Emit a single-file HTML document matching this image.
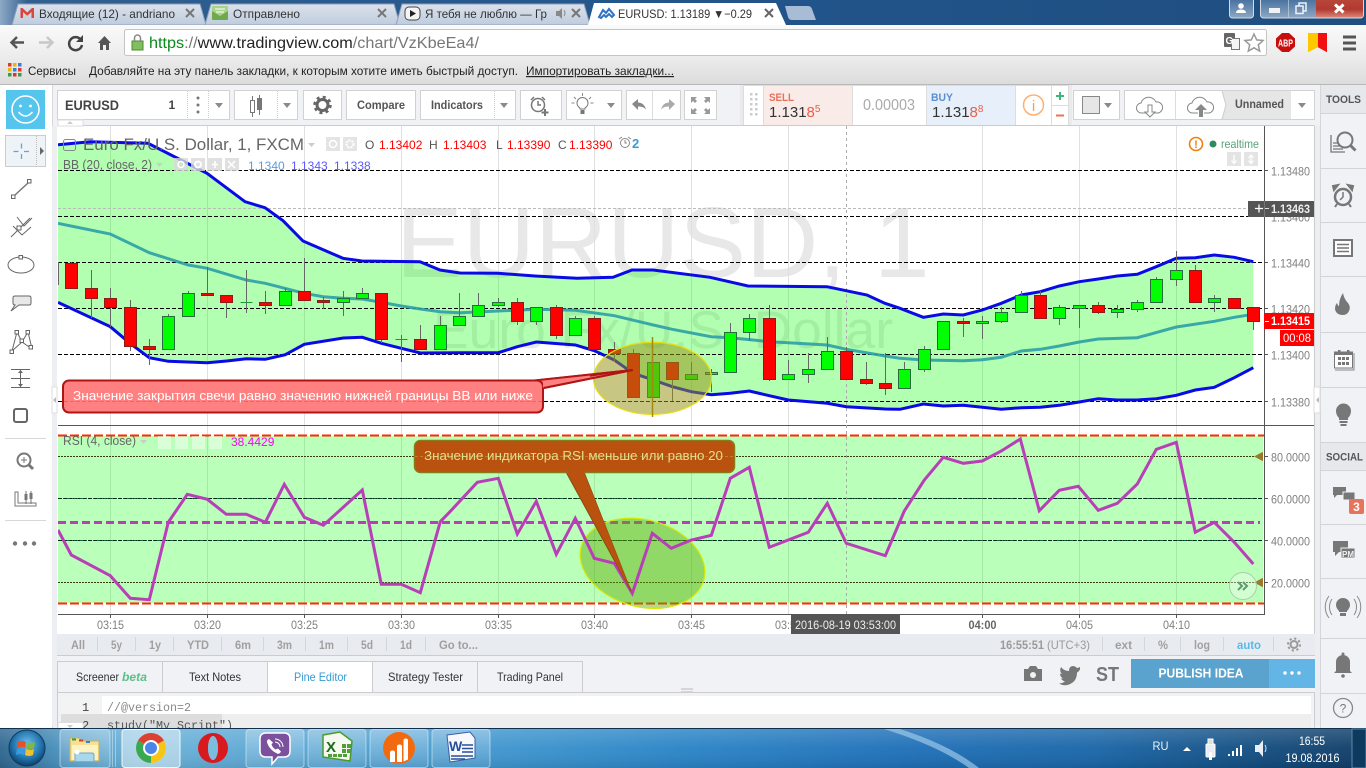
<!DOCTYPE html>
<html lang="ru"><head><meta charset="utf-8"><title>EURUSD</title>
<style>
html,body{margin:0;padding:0;width:1366px;height:768px;overflow:hidden;background:#fff}
svg{display:block}
text{font-family:"Liberation Sans","Noto Sans CJK SC",sans-serif}
.ax{font-size:12px;fill:#808080}
.tm{font-size:12px;fill:#808080;text-anchor:middle}
.rg{font-size:12px;font-weight:bold;fill:#a0a0a0}
.tb{font-size:12px;fill:#333}
.tab{font-size:12px;fill:#333}
.btn{fill:#fff;stroke:#d2d2d2}
.car{fill:#8a8a8a}
.ic{fill:none;stroke:#777;stroke-width:1.5}
.ig{fill:#777}
.g{fill:#0f0;stroke:#2a6a40}
.r{fill:#f00;stroke:#8a1c1c}
</style></head><body>
<svg width="1366" height="768" viewBox="0 0 1366 768" xmlns="http://www.w3.org/2000/svg">
<defs>
<linearGradient id="title" x1="0" x2="1" y1="0" y2="0"><stop offset="0" stop-color="#8fa9c6"/><stop offset=".02" stop-color="#31608f"/><stop offset=".5" stop-color="#22558c"/><stop offset="1" stop-color="#1f4e80"/></linearGradient>
<linearGradient id="itab" x1="0" x2="0" y1="0" y2="1"><stop offset="0" stop-color="#dbe2ec"/><stop offset="1" stop-color="#bfccdd"/></linearGradient>
<linearGradient id="tool" x1="0" x2="0" y1="0" y2="1"><stop offset="0" stop-color="#fafafa"/><stop offset="1" stop-color="#ececec"/></linearGradient>
<linearGradient id="book" x1="0" x2="0" y1="0" y2="1"><stop offset="0" stop-color="#ececec"/><stop offset="1" stop-color="#dcdcdc"/></linearGradient>
<linearGradient id="task" x1="0" x2="1" y1="0" y2="0"><stop offset="0" stop-color="#2e6690"/><stop offset=".05" stop-color="#4d98c4"/><stop offset=".1" stop-color="#6cb2d8"/><stop offset=".37" stop-color="#3e95ce"/><stop offset=".5" stop-color="#2a84c6"/><stop offset=".66" stop-color="#1f70b8"/><stop offset=".8" stop-color="#1a66a8"/><stop offset=".92" stop-color="#134e80"/><stop offset="1" stop-color="#103c66"/></linearGradient>
<linearGradient id="shine" x1="0" x2="0" y1="0" y2="1"><stop offset="0" stop-color="#fff" stop-opacity=".18"/><stop offset=".5" stop-color="#fff" stop-opacity=".04"/><stop offset="1" stop-color="#000" stop-opacity=".08"/></linearGradient>
<linearGradient id="wb" x1="0" x2="0" y1="0" y2="1"><stop offset="0" stop-color="#3f6b9b"/><stop offset="1" stop-color="#8ea7c2"/></linearGradient>
<linearGradient id="wr" x1="0" x2="0" y1="0" y2="1"><stop offset="0" stop-color="#b9483c"/><stop offset=".6" stop-color="#b23a30"/><stop offset="1" stop-color="#d98274"/></linearGradient>
<linearGradient id="tbtn" x1="0" x2="0" y1="0" y2="1"><stop offset="0" stop-color="#fff" stop-opacity=".3"/><stop offset="1" stop-color="#fff" stop-opacity=".08"/></linearGradient>
<radialGradient id="orb" cx=".5" cy=".4" r=".6"><stop offset="0" stop-color="#6fc3ee"/><stop offset=".7" stop-color="#1d6ea8"/><stop offset="1" stop-color="#0f3f66"/></radialGradient>
<clipPath id="ch"><rect x="58" y="126" width="1206" height="299"/></clipPath>
<clipPath id="ch2"><rect x="58" y="426" width="1206" height="188"/></clipPath>
</defs>

<!-- page base -->
<rect width="1366" height="768" fill="#f1f2f6"/>

<!-- title bar -->
<rect width="1366" height="25" fill="url(#title)"/>
<path d="M12 25 18 4H200L206 25z" fill="url(#itab)" stroke="#8ea0b8"/>
<path d="M205 25 211 4H394L400 25z" fill="url(#itab)" stroke="#8ea0b8"/>
<path d="M396 25 402 4H584L590 25z" fill="url(#itab)" stroke="#8ea0b8"/>
<path d="M588 25 594 3H776L786 25z" fill="#fff"/>
<path d="M785 6H808Q811 6 812 9L816 20H792Q789 20 788 17z" fill="#a9bcd6"/>
<!-- tab icons -->
<path d="M20.500 18V8H22.500L27.200 12.500 32 8H34V18H31.500V12L27.200 15.800 23 12V18z" fill="#d8473c"/>
<text class="tab" x="39" y="18" textLength="136" lengthAdjust="spacingAndGlyphs" fill="#555">Входящие (12) - andriano</text>
<path d="M186 9l8 8M194 9l-8 8" stroke="#777" stroke-width="2"/>
<rect x="212" y="6" width="16" height="14" fill="#6eaa4c" rx="1"/><path d="M212 6h16v5l-8 5-8-5z" fill="#a8d48a"/><path d="M215 9h10M216 12h8" stroke="#fff"/>
<text class="tab" x="233" y="18" textLength="67" lengthAdjust="spacingAndGlyphs">Отправлено</text>
<path d="M378 9l8 8M386 9l-8 8" stroke="#777" stroke-width="2"/>
<rect x="405" y="7" width="15" height="13" rx="4" fill="#f4f4f4" stroke="#444"/><path d="M410 10v7l6-3.500z" fill="#222"/>
<text class="tab" x="425" y="18" textLength="122" lengthAdjust="spacingAndGlyphs" fill="#555">Я тебя не люблю — Гр</text>
<path d="M556 11h3l3-3v11l-3-3h-3z" fill="#888"/><path d="M564 10q2 3 0 6" fill="none" stroke="#888"/>
<path d="M572 9l8 8M580 9l-8 8" stroke="#777" stroke-width="2"/>
<path d="M599 17l4-7 3 3 3-4 5 6-2 2-3-3-3 3-2-2-3 3z" fill="none" stroke="#2f73c4" stroke-width="2"/>
<text class="tab" x="618" y="18" fill="#222" textLength="134" lengthAdjust="spacingAndGlyphs">EURUSD: 1.13189 ▼−0.29</text>
<path d="M765 9l8 8M773 9l-8 8" stroke="#666" stroke-width="2"/>
<!-- window controls -->
<rect x="1229.500" y="-3" width="24" height="21" rx="3" fill="url(#wb)" stroke="#d0dbe6"/>
<circle cx="1241" cy="6" r="2.800" fill="#fff"/><path d="M1236 13q0-3.500 5-3.500t5 3.500z" fill="#fff"/>
<rect x="1260.500" y="-3" width="103" height="21" rx="3" fill="url(#wb)" stroke="#d0dbe6"/>
<path d="M1316 -2h46q1 0 1 1v17q0 1-1 1h-46z" fill="url(#wr)"/>
<path d="M1288.500 -2V17" stroke="#d0dbe6" stroke-opacity=".6"/>
<rect x="1269" y="8" width="11" height="5" fill="#f0f3f6"/>
<rect x="1296" y="6" width="7" height="7.500" fill="none" stroke="#eef2f6" stroke-width="1.500"/><path d="M1299 5.500V3h7v8h-2.500" fill="none" stroke="#eef2f6" stroke-width="1.500"/>
<path d="M1335 4.500l8.500 8M1343.500 4.500l-8.500 8" stroke="#fff" stroke-width="3"/>

<!-- address toolbar -->
<rect y="25" width="1366" height="32" fill="url(#tool)"/>
<rect y="57" width="1366" height="27" fill="url(#book)"/>
<rect y="84" width="1366" height="1" fill="#b8b8b8"/>
<path d="M24 42.500H12M17 37l-5.500 5.500L17 48" fill="none" stroke="#555" stroke-width="2.500"/>
<path d="M39 42.500H52M47 37l5.500 5.500L47 48" fill="none" stroke="#c8c8c8" stroke-width="2.500"/>
<path d="M81 40a6.500 6.500 0 1 0 1 5" fill="none" stroke="#444" stroke-width="2.500"/><path d="M83 35v7h-7z" fill="#444"/>
<path d="M98 43l6.500-7 6.500 7h-2v7h-3v-5h-3v5h-3v-7z" fill="#555"/>
<rect x="124.500" y="29.500" width="1142" height="26" rx="2" fill="#fff" stroke="#c4c4c4"/>
<rect x="132" y="41" width="11" height="9" fill="#7fbf60" stroke="#4d8a30"/><path d="M134.500 41v-3a3 3 0 0 1 6 0v3" fill="none" stroke="#888" stroke-width="1.500"/>
<text x="149" y="48" font-size="16" textLength="330" lengthAdjust="spacingAndGlyphs"><tspan fill="#0a8a1a">https</tspan><tspan fill="#777">://</tspan><tspan fill="#222">www.tradingview.com</tspan><tspan fill="#777">/chart/VzKbeEa4/</tspan></text>
<rect x="1224" y="33" width="11" height="14" rx="1" fill="#666"/><rect x="1231.500" y="38.500" width="8" height="11" fill="#f4f4f4" stroke="#777"/>
<text x="1225.500" y="44" font-size="10" fill="#fff" font-weight="bold">G</text>
<path d="M1254 34l2.700 5.900 6.400.6-4.800 4.300 1.400 6.300-5.700-3.300-5.700 3.300 1.400-6.300-4.800-4.300 6.400-.6z" fill="#fff" stroke="#999" stroke-width="1.500"/>
<path d="M1282 33h7l6 5.500v8L1289 52h-7l-6-5.500v-8z" fill="#c90c0c"/>
<text x="1278" y="46.500" font-size="10" font-weight="bold" fill="#fff" textLength="15" lengthAdjust="spacingAndGlyphs">ABP</text>
<path d="M1308 33h10v14.200l-10 5z" fill="#fdc800"/><path d="M1318 33h9v19.200l-9-5z" fill="#f01010"/>
<path d="M1343 37h13M1343 43h13M1343 49h13" stroke="#555" stroke-width="3"/>
<!-- bookmarks -->
<g><rect x="8" y="63" width="3.500" height="3.500" fill="#d83b2b"/><rect x="13" y="63" width="3.500" height="3.500" fill="#f0b400"/><rect x="18" y="63" width="3.500" height="3.500" fill="#3a7de0"/><rect x="8" y="68" width="3.500" height="3.500" fill="#f0b400"/><rect x="13" y="68" width="3.500" height="3.500" fill="#3a7de0"/><rect x="18" y="68" width="3.500" height="3.500" fill="#d83b2b"/><rect x="8" y="73" width="3.500" height="3.500" fill="#3a9a4a"/><rect x="13" y="73" width="3.500" height="3.500" fill="#d83b2b"/><rect x="18" y="73" width="3.500" height="3.500" fill="#3a9a4a"/></g>
<text x="28" y="75" font-size="12" fill="#222" textLength="48" lengthAdjust="spacingAndGlyphs">Сервисы</text>
<text x="89" y="75" font-size="12" fill="#222" textLength="429" lengthAdjust="spacingAndGlyphs">Добавляйте на эту панель закладки, к которым хотите иметь быстрый доступ.</text>
<text x="526" y="75" font-size="12" fill="#222" textLength="148" lengthAdjust="spacingAndGlyphs" text-decoration="underline">Импортировать закладки...</text>

<!-- left toolbar -->
<rect y="85" width="52" height="643" fill="#fff"/>
<rect x="52" y="85" width="1" height="643" fill="#d8d8dc"/>
<rect x="6" y="90" width="39" height="39" fill="#56c5ed"/>
<circle cx="25.500" cy="109.500" r="13.500" fill="none" stroke="#fff" stroke-width="1.500"/><circle cx="20.500" cy="106" r="1.400" fill="#fff"/><circle cx="30.500" cy="106" r="1.400" fill="#fff"/><path d="M18.500 112q7 8 14 0" fill="none" stroke="#fff" stroke-width="1.500"/>
<rect x="5.500" y="135.500" width="40" height="31" fill="#eef3f8" stroke="#ccc"/>
<path d="M36.500 136v30" stroke="#bbb" stroke-dasharray="1 1"/><path d="M40 147v8l4-4z" fill="#666"/>
<path d="M13.500 151.500h5M24 151.500h5M21.500 143.500v5M21.500 154v5" stroke="#5aa8d8" stroke-width="1.300"/>
<path d="M15 195l13-12" class="ic" stroke-width="1"/><rect x="11.500" y="195" width="3.500" height="3.500" fill="#fff" stroke="#666"/><rect x="27.500" y="179.500" width="3.500" height="3.500" fill="#fff" stroke="#666"/>
<path d="M11 237l19-19M17 217l7 9 8-8M13 226l9 9 9-8" fill="none" stroke="#666"/><rect x="17" y="226" width="4" height="4" fill="#fff" stroke="#666"/>
<ellipse cx="21" cy="265" rx="13" ry="8" fill="none" stroke="#666"/><rect x="19" y="255.500" width="3.500" height="3.500" fill="#fff" stroke="#666"/>
<path d="M15 296h14q2 0 2 2v5q0 2-2 2H19l-8 6 4-6q-2 0-2-2v-5q0-2 2-2z" fill="#e8e8e8" stroke="#666"/>
<path d="M12 351l5-19 5 10 6-10 4 17M22 342l-5-10M22 342l6-10M12 351l10-9 10 7" fill="none" stroke="#666"/><rect x="10" y="350" width="3.500" height="3.500" fill="#fff" stroke="#666"/><rect x="15" y="330.500" width="3.500" height="3.500" fill="#fff" stroke="#666"/><rect x="26" y="330.500" width="3.500" height="3.500" fill="#fff" stroke="#666"/><rect x="20" y="339" width="3.500" height="3.500" fill="#fff" stroke="#666"/><rect x="29" y="345.500" width="3.500" height="3.500" fill="#fff" stroke="#666"/>
<path d="M11 369.500h19M11 387.500h19M11 378.500h19M20.500 370v17" stroke="#666" fill="none"/><path d="M18 373l2.500-3 2.500 3zM18 384l2.500 3 2.500-3z" fill="#666"/>
<rect x="14" y="409" width="13" height="13" rx="2" fill="#fff" stroke="#666" stroke-width="2"/>
<path d="M5 438.500h41M5 520.500h41" stroke="#d8d8d8"/>
<circle cx="24" cy="460" r="6.500" fill="none" stroke="#777" stroke-width="2"/><path d="M21 460h6M24 457v6" stroke="#777"/><path d="M29 465l4 4" stroke="#777" stroke-width="3"/>
<path d="M15 492v14h21v-3h-18v-11z" fill="none" stroke="#777"/><path d="M26 491v13M31 491v13" stroke="#777"/><rect x="24.500" y="494" width="3" height="6" fill="#777"/><rect x="29.500" y="493" width="3" height="6" fill="#777"/>
<circle cx="15" cy="543.500" r="2.200" fill="#777"/><circle cx="25" cy="543.500" r="2.200" fill="#777"/><circle cx="34" cy="543.500" r="2.200" fill="#777"/>

<!-- chart top toolbar -->
<rect x="57.500" y="90.500" width="172" height="29" class="btn"/>
<text x="65" y="110" font-size="14" font-weight="bold" fill="#444" textLength="54" lengthAdjust="spacingAndGlyphs">EURUSD</text>
<text x="168.500" y="109" font-size="12" font-weight="bold" fill="#444">1</text>
<path d="M187.500 91v28M208.500 91v28" stroke="#ccc" stroke-dasharray="1 1"/>
<circle cx="198" cy="98" r="1.500" fill="#777"/><circle cx="198" cy="105" r="1.500" fill="#777"/><circle cx="198" cy="112" r="1.500" fill="#777"/>
<path class="car" d="M215 103h8l-4 5z"/>
<rect x="234.500" y="90.500" width="63" height="29" class="btn"/>
<path d="M252.500 96v21M259.500 95v20" stroke="#777"/><rect x="250.500" y="100.500" width="4" height="12" fill="#fff" stroke="#777"/><rect x="257" y="98" width="5" height="12" fill="#777"/>
<path d="M277.500 91v28" stroke="#ccc" stroke-dasharray="1 1"/><path class="car" d="M283 103h8l-4 5z"/>
<rect x="303.500" y="90.500" width="38" height="29" class="btn"/>
<circle cx="322.500" cy="105" r="5.500" fill="none" stroke="#666" stroke-width="3"/><circle cx="322.500" cy="105" r="8" fill="none" stroke="#666" stroke-width="2.500" stroke-dasharray="3 3.280"/>
<rect x="346.500" y="90.500" width="69" height="29" class="btn"/>
<text x="357" y="109" font-size="12" font-weight="bold" fill="#555" textLength="48" lengthAdjust="spacingAndGlyphs">Compare</text>
<rect x="420.500" y="90.500" width="95" height="29" class="btn"/>
<text x="431" y="109" font-size="12" font-weight="bold" fill="#555" textLength="52" lengthAdjust="spacingAndGlyphs">Indicators</text>
<path d="M494.500 91v28" stroke="#ccc" stroke-dasharray="1 1"/><path class="car" d="M500 103h8l-4 5z"/>
<rect x="520.500" y="90.500" width="41" height="29" class="btn"/>
<circle cx="538" cy="105" r="6.500" fill="none" stroke="#777" stroke-width="1.500"/><path d="M538 101v4h3M531 100l3-3M545 100l-3-3" fill="none" stroke="#777" stroke-width="1.500"/><path d="M545 109v7M541.500 112.500h7" stroke="#777" stroke-width="2"/>
<rect x="566.500" y="90.500" width="55" height="29" class="btn"/>
<path d="M580 108q-3-2-3-5a5.500 5.500 0 0 1 11 0q0 3-3 5v1h-5z" fill="#fff" stroke="#777"/><rect x="580.500" y="110" width="4" height="4" fill="#777"/><path d="M582.500 93v3M574 97l2 2M591 97l-2 2M571.500 103h3M590.500 103h3" stroke="#888"/>
<path class="car" d="M607 103h8l-4 5z"/>
<rect x="626.500" y="90.500" width="54" height="29" class="btn"/><path d="M652.500 91v28" stroke="#ddd"/>
<path d="M632 104l6-5v3.500q6 0 8 7-3-3.500-8-3V110z" fill="#888"/><path d="M675 104l-6-5v3.500q-6 0-8 7 3-3.500 8-3V110z" fill="#aaa"/>
<rect x="684.500" y="90.500" width="32" height="29" class="btn"/>
<path d="M691 97h6l-2 2 2 2-2 2-2-2-2 2zM710 97h-6l2 2-2 2 2 2 2-2 2 2zM691 114h6l-2-2 2-2-2-2-2 2-2-2zM710 114h-6l2-2-2-2 2-2 2 2 2-2z" fill="#999"/>
<!-- trading panel -->
<rect x="740" y="85" width="332" height="44" fill="#ddd" opacity=".35"/>
<rect x="743.500" y="85.500" width="325" height="40" fill="#fff" stroke="#ddd"/>
<g fill="#ccc"><rect x="750" y="93" width="2.500" height="2.500"/><rect x="755" y="93" width="2.500" height="2.500"/><rect x="750" y="98" width="2.500" height="2.500"/><rect x="755" y="98" width="2.500" height="2.500"/><rect x="750" y="103" width="2.500" height="2.500"/><rect x="755" y="103" width="2.500" height="2.500"/><rect x="750" y="108" width="2.500" height="2.500"/><rect x="755" y="108" width="2.500" height="2.500"/><rect x="750" y="113" width="2.500" height="2.500"/><rect x="755" y="113" width="2.500" height="2.500"/></g>
<rect x="764" y="86" width="88" height="39" fill="#f9ebe8"/>
<rect x="926" y="86" width="89" height="39" fill="#e7f0fa"/>
<path d="M763.500 86v39M852.500 86v39M926.500 86v39M1015.500 86v39M1051.500 86v39M1051 105.500h17" stroke="#ddd"/>
<text x="769" y="101" font-size="11" font-weight="bold" fill="#e8715a" textLength="25" lengthAdjust="spacingAndGlyphs">SELL</text>
<text x="769" y="117" font-size="15" fill="#333">1.131<tspan fill="#e8604a">8</tspan><tspan fill="#e8604a" font-size="10" dy="-5">5</tspan></text>
<text x="863" y="110" font-size="15.500" fill="#aaa" textLength="52" lengthAdjust="spacingAndGlyphs">0.00003</text>
<text x="931" y="101" font-size="11" font-weight="bold" fill="#5a8fd0" textLength="22" lengthAdjust="spacingAndGlyphs">BUY</text>
<text x="932" y="117" font-size="15" fill="#333">1.131<tspan fill="#e8604a">8</tspan><tspan fill="#e8604a" font-size="10" dy="-5">8</tspan></text>
<circle cx="1033.500" cy="105" r="10" fill="none" stroke="#ffb070" stroke-width="1.500"/><text x="1033.500" y="111" font-size="15" text-anchor="middle" fill="#ff9a50">i</text>
<path d="M1056 96h8M1060 92v8" stroke="#3cb878" stroke-width="2"/><path d="M1056 115.500h8" stroke="#e8735a" stroke-width="2"/>
<rect x="1073.500" y="90.500" width="46" height="29" class="btn"/>
<rect x="1082.500" y="96.500" width="17" height="17" fill="#e6e6e6" stroke="#888"/><path class="car" d="M1104 103h8l-4 5z"/>
<rect x="1124.500" y="90.500" width="190" height="29" class="btn"/>
<path d="M1175.500 91v28" stroke="#ddd"/>
<path d="M1222 91h69v28h-69l3-14z" fill="#e6e6e6"/><path d="M1222 91l4 14-4 14" fill="#fff" stroke="#ccc"/>
<path d="M1147 113h-5a5 5 0 0 1-1-10 8 8 0 0 1 15-1 5.500 5.500 0 0 1 2 11h-5" fill="none" stroke="#888"/><path d="M1148 105h4v7h3l-5 5-5-5h3z" fill="#fff" stroke="#888"/>
<path d="M1198 113h-5a5 5 0 0 1-1-10 8 8 0 0 1 15-1 5.500 5.500 0 0 1 2 11h-5" fill="none" stroke="#888"/><path d="M1199 117v-7h-4l6-6 6 6h-4v7z" fill="#888"/>
<text x="1235" y="108" font-size="12" font-weight="bold" fill="#555" textLength="49" lengthAdjust="spacingAndGlyphs">Unnamed</text>
<path class="car" d="M1298 103h8l-4 5z"/>

<!-- right panel -->
<rect x="1320" y="85" width="46" height="643" fill="#f1f2f6"/>
<path d="M1320.500 85v643" stroke="#d6d6da"/>
<rect x="1321" y="85" width="45" height="28" fill="#e6e8ec"/>
<text x="1326" y="103" font-size="11" font-weight="bold" fill="#555" textLength="35" lengthAdjust="spacingAndGlyphs">TOOLS</text>
<path d="M1320 113.500h46M1320 168.500h46M1320 222.500h46M1320 276.500h46M1320 332.500h46M1320 387.500h46M1320 442.500h46M1320 470.500h46M1320 524.500h46M1320 578.500h46M1320 638.500h46M1320 693.500h46" stroke="#d4d4d8"/>
<rect x="1321" y="443" width="45" height="27" fill="#e6e8ec"/>
<text x="1326" y="460.500" font-size="11" font-weight="bold" fill="#555" textLength="37" lengthAdjust="spacingAndGlyphs">SOCIAL</text>
<path d="M1331 135v17h14M1333 143h5M1333 146h7M1333 149h10" fill="none" stroke="#777" stroke-width="1.300"/><circle cx="1345" cy="140" r="7.500" fill="#f1f2f6" stroke="#777" stroke-width="2"/><path d="M1350.500 145.500l5 5" stroke="#777" stroke-width="3"/>
<circle cx="1343" cy="197" r="8" fill="none" stroke="#777" stroke-width="2.500"/><path d="M1343 192v5l-3 3" fill="none" stroke="#777" stroke-width="1.500"/><path d="M1334 190l4-5-5 1zM1352 190l-4-5 5 1zM1337 204l-2 3M1349 204l2 3" stroke="#777" stroke-width="2" fill="#777"/>
<rect x="1334" y="240" width="18" height="16" fill="#fff" stroke="#777" stroke-width="2"/><path d="M1337 244.500h12M1337 248h12M1337 251.500h12" stroke="#777" stroke-width="1.500"/>
<path d="M1343 293q1 6 5 10 3 4 1 8-2 4-6 4-7 0-8-6 0-4 2-6 1 3 2 3 0-7 4-13z" fill="#777"/>
<path d="M1354 353v17h-19" fill="none" stroke="#888"/><rect x="1334.500" y="352" width="18" height="16" fill="#fff" stroke="#777"/><rect x="1334.500" y="352" width="18" height="3" fill="#777"/><rect x="1338" y="350" width="2.500" height="4" fill="#777"/><rect x="1347" y="350" width="2.500" height="4" fill="#777"/><g fill="#777"><rect x="1338" y="357" width="3" height="3"/><rect x="1342" y="357" width="3" height="3"/><rect x="1346" y="357" width="3" height="3"/><rect x="1338" y="362" width="3" height="3"/><rect x="1342" y="362" width="3" height="3"/><rect x="1346" y="362" width="3" height="3"/></g>
<path d="M1339 418q-3-3-3-7a7.500 7.500 0 0 1 15 0q0 4-3 7v2h-9z" fill="#777"/><rect x="1339.500" y="421" width="8" height="2" fill="#777"/><rect x="1340.500" y="424" width="6" height="2" fill="#777"/>
<path d="M1333 487h13v8h-9l-3 3v-3h-1z" fill="#777"/><path d="M1343 492h12v8h-1v3l-3-3h-8z" fill="#777" stroke="#f1f2f6"/>
<rect x="1349" y="499" width="15" height="15" rx="2" fill="#e6735c"/><text x="1356.500" y="511" font-size="12" font-weight="bold" text-anchor="middle" fill="#fff">3</text>
<path d="M1333 541h15v11h-9l-4 4v-4h-2z" fill="#777"/><rect x="1341" y="548" width="14" height="10" fill="#777" stroke="#f1f2f6"/>
<text x="1342" y="557" font-size="8" font-weight="bold" fill="#f1f2f6">PM</text>
<path d="M1339 611q-3-3-3-6a7 7 0 0 1 14 0q0 3-3 6v1h-8z" fill="#777"/><rect x="1340" y="613" width="6" height="3" fill="#777"/>
<path d="M1332 599a14 14 0 0 0 0 16M1354 599a14 14 0 0 1 0 16M1329 596a18 18 0 0 0 0 22M1357 596a18 18 0 0 1 0 22" fill="none" stroke="#888"/>
<path d="M1336 671v-9a7 7 0 0 1 14 0v9l2 2h-18z" fill="#777"/><circle cx="1343" cy="676" r="1.800" fill="#777"/><circle cx="1343" cy="654" r="1.500" fill="#777"/>
<circle cx="1343" cy="708" r="9.500" fill="none" stroke="#888" stroke-width="1.300"/><text x="1343" y="712.500" font-size="12" text-anchor="middle" fill="#777">?</text>

<!-- chart frame -->
<rect x="57" y="126" width="1258" height="509" fill="#fff"/>
<path d="M57.500 125.500h1257M1314.500 126v529" stroke="#ccc" fill="none"/>
<rect x="58" y="120" width="25" height="6" fill="#fff" stroke="#ddd"/><path d="M67 124h6l-3-3z" fill="#ccc"/>
<path d="M1315 126h5v600h-5zM52 126h5v600h-5z" fill="#eceef2"/>
<rect x="1314" y="387" width="6" height="26" fill="#fff" stroke="#ddd" /><path d="M1319 397v6l-3-3z" fill="#bbb"/>
<rect x="52" y="387" width="5" height="26" fill="#fff" stroke="#ddd"/><path d="M56 397v6l-3-3z" fill="#bbb"/>

<!-- main pane -->
<g clip-path="url(#ch)">
<text x="396" y="277" font-size="100" fill="#e8e8e8">EURUSD, 1</text>
<text x="433" y="348" font-size="53" fill="#e8e8e8" textLength="460" lengthAdjust="spacingAndGlyphs">Euro Fx/U.S. Dollar</text>
<path d="M110.500 126V425M207.500 126V425M304.500 126V425M401.500 126V425M498.500 126V425M594.500 126V425M691.500 126V425M788.500 126V425M982.500 126V425M1079.500 126V425M1176.500 126V425" stroke="#e0e0e0" fill="none"/>
<polygon fill="#0f0" fill-opacity=".3" points="58,144.700 90,141.700 148,143.300 207,173.300 245,201.700 265,207.700 283,220.700 303,241 343,258.300 362,261 420,261.700 440,270 460,273 498,273.300 535,276 577,278.300 613,277.300 632,270 653,270 710,277.300 748,286 827,286.700 867,295 885,303.300 900,308.300 923.300,317.300 943.300,314 963.300,315 982.300,310 1001.300,303.300 1021.300,295 1040.300,291.700 1059.300,286 1079.300,281.700 1098.300,279 1117.300,276 1137.300,274.300 1156.300,266.700 1176.300,258.300 1195.300,257.700 1214.300,255 1234.300,257.300 1253.300,261.700 1253.300,367.700 1234.300,377.700 1214.300,387.300 1195.300,390 1176.300,395.300 1156.300,398.700 1137.300,400 1117.300,400 1098.300,398.700 1079.300,402 1059.300,405.300 1040.300,407.300 1021.300,407.700 1001.300,409.300 982.300,407.300 963.300,405.300 943.300,406 923.300,404 900,409.300 885.300,409 846.300,406.700 827.300,403.300 788.300,400 769.300,395.700 749.300,391 730.300,393.300 711.300,394.700 691.300,391.700 672.300,386.700 653.300,380 633.300,373.300 614.300,360 594.300,350.700 575.300,345 536.300,342 517.300,346.700 498.300,352.700 460,352.700 420.300,353 401.300,348.300 381.300,343.300 362.300,337.300 343.300,338 304.300,344.300 285.300,354.700 265.300,359.300 246.300,358.700 226.700,361 207.300,362.700 168.300,361.300 149.300,357.700 130,343.300 110.300,326.700 58,302.300"/>
<path d="M58 170.500H1264M58 216.500H1264M58 262.500H1264M58 308.500H1264M58 354.500H1264M58 401.500H1264" stroke="#000" stroke-dasharray="4 2" fill="none"/>
<path d="M58 208.500H1264" stroke="#bbb" stroke-dasharray="3 2"/>
<path d="M846.500 126V425" stroke="#aaa" stroke-dasharray="3 3"/>
<polyline fill="none" stroke="#2e9ea6" stroke-width="3" stroke-opacity=".9" points="58,223.300 110.300,234 149.300,252.700 188.300,265 207.300,268.300 246.300,280 265.300,283.300 304.300,293.300 323.300,296.700 343.300,298.300 362.300,299 381.300,302.300 401.300,306 420.300,309 440.300,311.700 460,312.700 498.300,311 536.300,309.300 575.300,310.300 614.300,315.700 653.300,325 672.300,329.300 711.300,336.700 730.300,337.700 769.300,341.700 788.300,342.700 827.300,345 846.300,349.300 885.300,356 900,358.300 923.300,360 963.300,360.700 982.300,359.700 1001.300,357.300 1021.300,351 1040.300,349.300 1059.300,346 1079.300,342 1098.300,339 1137.300,337.700 1176.300,327 1214.300,321.300 1234.300,317.300 1253.300,314.300"/>
<g fill="none" stroke="#0a0ae6" stroke-width="3">
<polyline points="58,144.700 90,141.700 148,143.300 207,173.300 245,201.700 265,207.700 283,220.700 303,241 343,258.300 362,261 420,261.700 440,270 460,273 498,273.300 535,276 577,278.300 613,277.300 632,270 653,270 710,277.300 748,286 827,286.700 867,295 885,303.300 900,308.300 923.300,317.300 943.300,314 963.300,315 982.300,310 1001.300,303.300 1021.300,295 1040.300,291.700 1059.300,286 1079.300,281.700 1098.300,279 1117.300,276 1137.300,274.300 1156.300,266.700 1176.300,258.300 1195.300,257.700 1214.300,255 1234.300,257.300 1253.300,261.700"/>
<polyline points="58,302.300 110.300,326.700 130,343.300 149.300,357.700 168.300,361.300 207.300,362.700 226.700,361 246.300,358.700 265.300,359.300 285.300,354.700 304.300,344.300 343.300,338 362.300,337.300 381.300,343.300 401.300,348.300 420.300,353 460,352.700 498.300,352.700 517.300,346.700 536.300,342 575.300,345 594.300,350.700 614.300,360 633.300,373.300 653.300,380 672.300,386.700 691.300,391.700 711.300,394.700 730.300,393.300 749.300,391 769.300,395.700 788.300,400 827.300,403.300 846.300,406.700 885.300,409 900,409.300 923.300,404 943.300,406 963.300,405.300 982.300,407.300 1001.300,409.300 1021.300,407.700 1040.300,407.300 1059.300,405.300 1079.300,402 1098.300,398.700 1117.300,400 1137.300,400 1156.300,398.700 1176.300,395.300 1195.300,390 1214.300,387.300 1234.300,377.700 1253.300,367.700"/>
</g>
<!-- wicks -->
<path fill="none" stroke="#666" d="M58.500 262V285M71.500 262V288M91.500 270V318M110.500 288V327M130.500 300V351M149.500 339V365M168.500 314V349M188.500 291V316M207.500 267V295M226.500 295V318M246.500 270V313M265.500 291V314M285.500 288V305M304.500 258V300M323.500 297V309M343.500 291V316M362.500 288V298M381.500 293V343M401.500 335V362M420.500 325V349M440.500 316V349M459.500 293V325M478.500 293V316M498.500 298V307M517.500 298V325M536.500 307V325M556.500 305V339M575.500 316V335M594.500 316V349M614.500 342V362M633.500 349V397M672.500 362V401M691.500 362V379M711.500 369V392M730.500 323V372M749.500 314V341M769.500 305V381M788.500 360V379M808.500 353V383M827.500 337V369M846.500 347V379M866.500 362V385M885.500 353V395M904.500 362V389M924.500 346V372M943.500 321V349M963.500 318V337M982.500 316V339M1001.500 307V323M1021.500 291V312M1040.500 291V318M1059.500 305V325M1079.500 305V328M1098.500 302V314M1117.500 305V318M1137.500 300V312M1156.500 277V302M1176.500 251V286M1195.500 265V302M1214.500 295V312M1234.500 298V308M1253.500 307V330"/>
<!-- bodies -->
<rect class="r" x="65.500" y="263.500" width="12" height="25"/><rect class="r" x="85.500" y="288.500" width="12" height="10"/><rect class="r" x="104.500" y="298.500" width="12" height="9"/><rect class="r" x="124.500" y="307.500" width="12" height="39"/><rect class="r" x="143.500" y="346.500" width="12" height="3"/>
<rect class="g" x="162.500" y="316.500" width="12" height="33"/><rect class="g" x="182.500" y="293.500" width="12" height="23"/>
<rect class="r" x="201.500" y="293.500" width="12" height="2"/><rect class="r" x="220.500" y="295.500" width="12" height="7"/>
<path d="M240.500 302.500h12" stroke="#1a9a30"/>
<rect class="r" x="259.500" y="302.500" width="12" height="3"/><rect class="g" x="279.500" y="291.500" width="12" height="14"/><rect class="r" x="298.500" y="291.500" width="12" height="9"/><rect class="r" x="317.500" y="300.500" width="12" height="2"/><rect class="g" x="337.500" y="298.500" width="12" height="4"/><rect class="g" x="356.500" y="293.500" width="12" height="5"/><rect class="r" x="375.500" y="293.500" width="12" height="46"/>
<path d="M395.500 339.500h12" stroke="#1a9a30"/>
<rect class="r" x="414.500" y="339.500" width="12" height="10"/><rect class="g" x="434.500" y="325.500" width="12" height="24"/><rect class="g" x="453.500" y="316.500" width="12" height="9"/><rect class="g" x="472.500" y="305.500" width="12" height="11"/><rect class="g" x="492.500" y="302.500" width="12" height="3"/><rect class="r" x="511.500" y="302.500" width="12" height="19"/><rect class="g" x="530.500" y="307.500" width="12" height="14"/><rect class="r" x="550.500" y="307.500" width="12" height="28"/><rect class="g" x="569.500" y="318.500" width="12" height="17"/><rect class="r" x="588.500" y="318.500" width="12" height="31"/><rect class="r" x="608.500" y="349.500" width="12" height="4"/><rect class="r" x="627.500" y="353.500" width="12" height="44"/><rect class="g" x="647.500" y="362.500" width="12" height="35"/><rect class="r" x="666.500" y="362.500" width="12" height="17"/><rect class="g" x="685.500" y="374.500" width="12" height="5"/><rect class="g" x="705.500" y="372.500" width="12" height="2"/><rect class="g" x="724.500" y="332.500" width="12" height="40"/><rect class="g" x="743.500" y="318.500" width="12" height="14"/><rect class="r" x="763.500" y="318.500" width="12" height="61"/><rect class="g" x="782.500" y="374.500" width="12" height="5"/><rect class="g" x="802.500" y="369.500" width="12" height="5"/><rect class="g" x="821.500" y="351.500" width="12" height="18"/><rect class="r" x="840.500" y="351.500" width="12" height="28"/><rect class="r" x="860.500" y="379.500" width="12" height="4"/><rect class="r" x="879.500" y="383.500" width="12" height="5"/><rect class="g" x="898.500" y="369.500" width="12" height="19"/><rect class="g" x="918.500" y="349.500" width="12" height="20"/><rect class="g" x="937.500" y="321.500" width="12" height="28"/><rect class="r" x="957.500" y="321.500" width="12" height="2"/><rect class="g" x="976.500" y="321.500" width="12" height="2"/><rect class="g" x="995.500" y="312.500" width="12" height="9"/><rect class="g" x="1015.500" y="295.500" width="12" height="17"/><rect class="r" x="1034.500" y="295.500" width="12" height="23"/><rect class="g" x="1053.500" y="307.500" width="12" height="11"/><rect class="g" x="1073.500" y="305.500" width="12" height="3"/><rect class="r" x="1092.500" y="305.500" width="12" height="7"/><rect class="g" x="1111.500" y="309.500" width="12" height="3"/><rect class="g" x="1131.500" y="302.500" width="12" height="7"/><rect class="g" x="1150.500" y="279.500" width="12" height="23"/><rect class="g" x="1170.500" y="270.500" width="12" height="9"/><rect class="r" x="1189.500" y="270.500" width="12" height="32"/><rect class="g" x="1208.500" y="298.500" width="12" height="4"/><rect class="r" x="1228.500" y="298.500" width="12" height="10"/><rect class="r" x="1247.500" y="307.500" width="12" height="14"/>
<!-- red ellipse annotation -->
<ellipse cx="652.500" cy="378.300" rx="59" ry="36" fill="#969313" fill-opacity=".53" stroke="#e6de10" stroke-width="1.300"/>
<path d="M652.500 337V417" stroke="#a08a10" stroke-width="1.500"/>
<path d="M536 380.500 632.700 370 544 388V395H536z" fill="#ff8080" stroke="none"/>
<path d="M536 380.500 632.700 370 544 388" fill="none" stroke="#b01515" stroke-width="2"/>
<rect x="63" y="380.500" width="480" height="32" rx="6" fill="#ff8080" stroke="#b01515" stroke-width="2"/>
<path d="M534 380.500 632.700 370 543 388V381z" fill="#ff8080"/><path d="M534 380.500 632.700 370 543.500 388" fill="none" stroke="#b01515" stroke-width="2"/>
<path d="M632.700 370 590 374.500 590 376.700z" fill="#b01515"/>
<path d="M64 401.500H542" stroke="#c05050" stroke-dasharray="4 2" stroke-opacity=".5"/>
<text x="73" y="400" font-size="13" fill="#fff" textLength="460" lengthAdjust="spacingAndGlyphs">Значение закрытия свечи равно значению нижней границы BB или ниже</text>
<!-- legend -->
<rect x="63.500" y="139.500" width="12" height="11" rx="2" fill="none" stroke="#888"/>
<text x="83" y="150" font-size="17" fill="#666" textLength="221" lengthAdjust="spacingAndGlyphs">Euro Fx/U.S. Dollar, 1, FXCM</text>
<path d="M308 143h7l-3.500 4z" fill="#ccc"/>
<rect x="326" y="137" width="14" height="14" fill="#e4e4e4"/><rect x="343" y="137" width="14" height="14" fill="#e4e4e4"/>
<circle cx="333" cy="144" r="3.500" fill="none" stroke="#fff" stroke-width="1.500"/><circle cx="350" cy="144" r="3.500" fill="none" stroke="#fff" stroke-width="2" stroke-dasharray="2 1"/>
<text y="149" font-size="12"><tspan x="365" fill="#555">O</tspan><tspan x="379" fill="#f00">1.13402</tspan><tspan x="429" fill="#555">H</tspan><tspan x="443" fill="#f00">1.13403</tspan><tspan x="496" fill="#555">L</tspan><tspan x="507" fill="#f00">1.13390</tspan><tspan x="558" fill="#555">C</tspan><tspan x="569" fill="#f00">1.13390</tspan></text>
<circle cx="625" cy="143" r="4.500" fill="none" stroke="#888"/><path d="M619 139l3-2M631 139l-3-2M625 140v3h2" stroke="#888" fill="none"/>
<text x="632" y="148" font-size="13" font-weight="bold" fill="#3a9bd9">2</text>
<text x="63" y="169" font-size="12.500" fill="#666" textLength="89" lengthAdjust="spacingAndGlyphs">BB (20, close, 2)</text>
<path d="M156 163h7l-3.500 4z" fill="#ccc"/>
<g fill="#d8d8d8" fill-opacity=".8"><rect x="174" y="158" width="14" height="13"/><rect x="191" y="158" width="14" height="13"/><rect x="208" y="158" width="14" height="13"/><rect x="225" y="158" width="14" height="13"/></g>
<path d="M212 164.500h6M215 161v7M228 161l7 7M235 161l-7 7" stroke="#fff" stroke-width="1.500"/><circle cx="181" cy="164.500" r="3" fill="none" stroke="#fff" stroke-width="1.500"/><circle cx="198" cy="164.500" r="3" fill="none" stroke="#fff" stroke-width="2"/>
<text y="170" font-size="12"><tspan x="248" fill="#5a9ae0">1.1340</tspan><tspan x="291" fill="#5a5aff">1.1343</tspan><tspan x="334" fill="#5a5aff">1.1338</tspan></text>
<circle cx="1196" cy="144" r="6.500" fill="#fff" stroke="#f08010" stroke-width="1.600"/><text x="1196" y="148" font-size="11" text-anchor="middle" font-weight="bold" fill="#f08010">!</text>
<circle cx="1213" cy="144" r="3.500" fill="#2e8b60"/>
<text x="1221" y="148" font-size="12" fill="#5aa07a" textLength="38" lengthAdjust="spacingAndGlyphs">realtime</text>
<rect x="1227" y="152" width="14" height="14" fill="#e4e4e4"/><rect x="1244" y="152" width="14" height="14" fill="#e4e4e4"/>
<path d="M1234 155v8M1231.500 160.500l2.500 3 2.500-3M1251 155v8M1248.500 158l2.500-3 2.500 3M1248.500 160.500l2.500 3 2.500-3" fill="none" stroke="#fff" stroke-width="1.300"/>
</g>

<!-- RSI pane -->
<g clip-path="url(#ch2)">
<path d="M110.500 426V614M207.500 426V614M304.500 426V614M401.500 426V614M498.500 426V614M594.500 426V614M691.500 426V614M788.500 426V614M982.500 426V614M1079.500 426V614M1176.500 426V614" stroke="#e0e0e0" fill="none"/>
<rect x="58" y="436" width="1205" height="167" fill="#0f0" fill-opacity=".27"/>
<path d="M58 456.500H1263M58 582.500H1263" stroke="#3a3a10" stroke-dasharray="2 1"/>
<path d="M58 498.500H1263M58 540.500H1263" stroke="#063" stroke-dasharray="4 1"/>
<path d="M58 498.500H1263M58 540.500H1263" stroke="#000" stroke-dasharray="4 2" stroke-opacity=".6"/>
<path d="M58 435.500H1264M58 603.500H1264" stroke="#ff2a00" stroke-width="2" stroke-dasharray="9 3"/>
<path d="M58 522.500H1260" stroke="#b83fb8" stroke-width="3" stroke-dasharray="8 4"/>
<ellipse cx="642.500" cy="563.300" rx="63.500" ry="43.500" transform="rotate(15 642.500 563.300)" fill="#5fab00" fill-opacity=".45" stroke="#d4ea00" stroke-width="1.200"/>
<polyline fill="none" stroke="#b83fb8" stroke-width="3" points="58,530 71.300,555 110.300,575.700 130.300,598.300 149.300,599.700 168.300,522.300 187.300,494.300 207.300,499.300 226.300,514.300 246.300,514.300 265.300,522.300 284.300,484.300 304.300,517.300 323.300,525.300 362.300,490 381.300,584.300 401.300,584.300 420.300,592.700 440.300,521.700 450,511.700 477.300,482.300 498.300,478.300 517.300,534 536.300,501.300 556.300,554.300 575.300,518.300 594.300,558.300 614.300,563.300 632.300,593.300 652.300,533.300 671.300,548.300 691.300,540 711.300,535.300 730.300,478.300 749.300,467.300 769.300,547.300 808.300,532.300 827.300,503.300 846.300,543.300 885.300,555.700 904.300,511 924.300,480 943.300,457.300 963.300,463.300 982.300,461 1001.300,451 1020.300,439 1039.300,510.700 1059.300,490.300 1078.300,486.300 1098.300,510.300 1117.300,503.300 1137.300,484 1156.300,449.300 1176.300,442.300 1195.300,532.300 1214.300,522.300 1234.300,542.300 1253.300,564"/>
<path d="M566 472 631 591 584 472z" fill="#b8520e" stroke="#8b4a10"/>
<rect x="414.500" y="440.500" width="320" height="32" rx="6" fill="#b8520e" stroke="#8a7a1a" stroke-width="1.500"/>
<path d="M567 471 631 591 583.500 471z" fill="#b8520e"/>
<path d="M415 456.500H734" stroke="#c8a040" stroke-dasharray="3 2" stroke-opacity=".6"/>
<text x="424" y="460" font-size="12.500" fill="#e0e090" textLength="299" lengthAdjust="spacingAndGlyphs">Значение индикатора RSI меньше или равно 20</text>
<text x="63" y="445" font-size="12.500" fill="#666" textLength="73" lengthAdjust="spacingAndGlyphs">RSI (4, close)</text>
<path d="M140 440h7l-3.500 4z" fill="#ccc"/>
<g fill="#fff" fill-opacity=".45"><rect x="158" y="436" width="13" height="13"/><rect x="175" y="436" width="13" height="13"/><rect x="192" y="436" width="13" height="13"/><rect x="209" y="436" width="13" height="13"/></g>
<text x="231" y="446" font-size="12" fill="#f0f">38.4429</text>
<path d="M1263 451.700v9.500l-9-4.700zM1263 577.700v9.500l-9-4.700z" fill="#9a7a2a"/>
<circle cx="1243" cy="586" r="13.500" fill="#fff" fill-opacity=".35" stroke="#aacfaa"/>
<path d="M1238 582l4 4-4 4M1243 582l4 4-4 4" fill="none" stroke="#5f9a70" stroke-width="2"/>
</g>
<path d="M58 425.500H1314" stroke="#555"/>
<path d="M58 614.500H1264.500V126" fill="none" stroke="#555"/>
<path d="M1264 170.500h4M1264 208.500h4M1264 262.500h4M1264 308.500h4M1264 354.500h4M1264 401.500h4M1264 456.500h4M1264 498.500h4M1264 540.500h4M1264 582.500h4M110.500 614v4M207.500 614v4M304.500 614v4M401.500 614v4M498.500 614v4M594.500 614v4M691.500 614v4M982.500 614v4M1079.500 614v4M1176.500 614v4" stroke="#555"/>

<!-- price labels -->
<text class="ax" x="1271" y="175.500" textLength="39" lengthAdjust="spacingAndGlyphs">1.13480</text>
<text class="ax" x="1271" y="221.500" textLength="39" lengthAdjust="spacingAndGlyphs">1.13460</text>
<text class="ax" x="1271" y="267.500" textLength="39" lengthAdjust="spacingAndGlyphs">1.13440</text>
<text class="ax" x="1271" y="313.500" textLength="39" lengthAdjust="spacingAndGlyphs">1.13420</text>
<text class="ax" x="1271" y="359.500" textLength="39" lengthAdjust="spacingAndGlyphs">1.13400</text>
<text class="ax" x="1271" y="406.500" textLength="39" lengthAdjust="spacingAndGlyphs">1.13380</text>
<text class="ax" x="1271" y="461.500" textLength="39" lengthAdjust="spacingAndGlyphs">80.0000</text>
<text class="ax" x="1271" y="503.500" textLength="39" lengthAdjust="spacingAndGlyphs">60.0000</text>
<text class="ax" x="1271" y="545.500" textLength="39" lengthAdjust="spacingAndGlyphs">40.0000</text>
<text class="ax" x="1271" y="587.500" textLength="39" lengthAdjust="spacingAndGlyphs">20.0000</text>
<rect x="1248" y="201" width="66" height="16" fill="#555"/>
<path d="M1255 208.500h8M1259 204.500v8" stroke="#fff" stroke-width="1.300"/><path d="M1264.500 201v16" stroke="#777"/><path d="M1265 208.500h4" stroke="#ddd"/>
<text x="1271" y="213" font-size="12" font-weight="bold" fill="#eee" textLength="39" lengthAdjust="spacingAndGlyphs">1.13463</text>
<rect x="1264" y="313" width="50" height="16" fill="#f00"/><path d="M1265 321.500h4" stroke="#fff"/>
<text x="1271" y="325" font-size="12" font-weight="bold" fill="#fff" textLength="39" lengthAdjust="spacingAndGlyphs">1.13415</text>
<rect x="1280" y="330" width="34" height="16" fill="#f00"/>
<text x="1283" y="342" font-size="12" fill="#fff" textLength="28" lengthAdjust="spacingAndGlyphs">00:08</text>

<!-- time axis -->
<text class="tm" x="110.500" y="629" textLength="27" lengthAdjust="spacingAndGlyphs">03:15</text>
<text class="tm" x="207.500" y="629" textLength="27" lengthAdjust="spacingAndGlyphs">03:20</text>
<text class="tm" x="304.500" y="629" textLength="27" lengthAdjust="spacingAndGlyphs">03:25</text>
<text class="tm" x="401.500" y="629" textLength="27" lengthAdjust="spacingAndGlyphs">03:30</text>
<text class="tm" x="498.500" y="629" textLength="27" lengthAdjust="spacingAndGlyphs">03:35</text>
<text class="tm" x="594.500" y="629" textLength="27" lengthAdjust="spacingAndGlyphs">03:40</text>
<text class="tm" x="691.500" y="629" textLength="27" lengthAdjust="spacingAndGlyphs">03:45</text>
<text class="tm" x="788.500" y="629" textLength="27" lengthAdjust="spacingAndGlyphs">03:50</text>
<text x="982.500" y="629" font-size="12" font-weight="bold" fill="#666" text-anchor="middle" textLength="28" lengthAdjust="spacingAndGlyphs">04:00</text>
<text class="tm" x="1079.500" y="629" textLength="27" lengthAdjust="spacingAndGlyphs">04:05</text>
<text class="tm" x="1176.500" y="629" textLength="27" lengthAdjust="spacingAndGlyphs">04:10</text>
<path d="M846.500 425V615" stroke="#aaa" stroke-dasharray="3 3"/>
<rect x="791" y="615" width="109" height="19" fill="#555"/>
<text x="795" y="629" font-size="12" fill="#eee" textLength="101" lengthAdjust="spacingAndGlyphs">2016-08-19 03:53:00</text>

<!-- range bar -->
<rect x="57" y="634" width="1258" height="21" fill="#e8ebef"/>
<path d="M57 655.500H1315" stroke="#ccc"/>
<g class="rgg">
<text class="rg" x="71" y="649" textLength="14" lengthAdjust="spacingAndGlyphs">All</text>
<text class="rg" x="111" y="649" textLength="11" lengthAdjust="spacingAndGlyphs">5y</text>
<text class="rg" x="149" y="649" textLength="12" lengthAdjust="spacingAndGlyphs">1y</text>
<text class="rg" x="187" y="649" textLength="22" lengthAdjust="spacingAndGlyphs">YTD</text>
<text class="rg" x="235" y="649" textLength="16" lengthAdjust="spacingAndGlyphs">6m</text>
<text class="rg" x="277" y="649" textLength="15" lengthAdjust="spacingAndGlyphs">3m</text>
<text class="rg" x="319" y="649" textLength="15" lengthAdjust="spacingAndGlyphs">1m</text>
<text class="rg" x="361" y="649" textLength="12" lengthAdjust="spacingAndGlyphs">5d</text>
<text class="rg" x="400" y="649" textLength="12" lengthAdjust="spacingAndGlyphs">1d</text>
<text class="rg" x="439" y="649" textLength="39" lengthAdjust="spacingAndGlyphs">Go to...</text>
<text x="1000" y="649" font-size="12" font-weight="bold" fill="#9a9a9a" textLength="44" lengthAdjust="spacingAndGlyphs">16:55:51</text>
<text x="1047" y="649" font-size="12" fill="#9a9a9a" textLength="43" lengthAdjust="spacingAndGlyphs">(UTC+3)</text>
<text class="rg" x="1115" y="649" textLength="17" lengthAdjust="spacingAndGlyphs">ext</text>
<text class="rg" x="1158" y="649" textLength="10" lengthAdjust="spacingAndGlyphs">%</text>
<text class="rg" x="1194" y="649" textLength="16" lengthAdjust="spacingAndGlyphs">log</text>
<text x="1237" y="649" font-size="12" font-weight="bold" fill="#5bb8e8" textLength="24" lengthAdjust="spacingAndGlyphs">auto</text>
</g>
<path d="M97.500 637v14M135.500 637v14M173.500 637v14M221.500 637v14M263.500 637v14M305.500 637v14M347.500 637v14M386.500 637v14M425.500 637v14M1102.500 637v14M1144.500 637v14M1180.500 637v14M1223.500 637v14M1273.500 637v14" stroke="#d4d6da"/>
<circle cx="1294" cy="644.500" r="3.500" fill="none" stroke="#999" stroke-width="2"/><circle cx="1294" cy="644.500" r="6" fill="none" stroke="#999" stroke-width="2" stroke-dasharray="2.200 2.500"/>

<!-- bottom tabs -->
<rect x="57.500" y="661.500" width="525" height="31" fill="#f1f2f6" stroke="#ccc"/>
<rect x="267.500" y="661.500" width="105" height="32" fill="#fff" stroke="#ccc"/>
<path d="M268 692.500h104" stroke="#fff" stroke-width="2"/>
<path d="M162.500 662v30M477.500 662v30" stroke="#ccc"/>
<path d="M57 692.500H268M372 692.500H1315" stroke="#ccc"/>
<text class="tb" x="76" y="681" textLength="43" lengthAdjust="spacingAndGlyphs">Screener</text>
<text x="122" y="681" font-size="12" font-weight="bold" font-style="italic" fill="#5cc08a" textLength="25" lengthAdjust="spacingAndGlyphs">beta</text>
<text class="tb" x="189" y="681" textLength="52" lengthAdjust="spacingAndGlyphs">Text Notes</text>
<text x="294" y="681" font-size="12" fill="#3a9bd0" textLength="53" lengthAdjust="spacingAndGlyphs">Pine Editor</text>
<text class="tb" x="388" y="681" textLength="75" lengthAdjust="spacingAndGlyphs">Strategy Tester</text>
<text class="tb" x="497" y="681" textLength="66" lengthAdjust="spacingAndGlyphs">Trading Panel</text>
<path d="M1024 669h4l2-3h6l2 3h4v12h-18z" fill="#777"/><circle cx="1033" cy="675" r="3" fill="#f1f2f6"/>
<path d="M1080 667q-2 1-3 1-2-2-4-2-4 0-4 5-5 0-8-4-2 4 1 7l-2-.5q0 3 3 5h-2q1 2 4 3-3 2-6 2 5 3 10 1 8-3 8-12 2-1 3-3z" fill="#777"/>
<text x="1096" y="681" font-size="20" font-weight="bold" fill="#777" textLength="23" lengthAdjust="spacingAndGlyphs">ST</text>
<rect x="1131" y="659" width="138" height="29" fill="#5ba3cf"/><rect x="1269" y="659" width="46" height="29" fill="#63b5e5"/>
<text x="1158.500" y="677.500" font-size="13" font-weight="bold" fill="#fff" textLength="85" lengthAdjust="spacingAndGlyphs">PUBLISH IDEA</text>
<circle cx="1285" cy="673" r="1.700" fill="#fff"/><circle cx="1292" cy="673" r="1.700" fill="#fff"/><circle cx="1299" cy="673" r="1.700" fill="#fff"/>
<path d="M681 689h12M681 692h12" stroke="#bbb"/>

<!-- editor -->
<rect x="57.500" y="692.500" width="1257" height="36" fill="#f1f2f6" stroke="#ccc"/>
<rect x="61" y="696" width="1250" height="32" fill="#fff"/>
<rect x="61" y="696" width="41" height="18" fill="#f3f3f3"/>
<rect x="61" y="714" width="41" height="14" fill="#ddd"/>
<rect x="102" y="714" width="1209" height="14" fill="#eee"/>
<rect x="102" y="714" width="120" height="14" fill="#ddd"/>
<text x="82" y="711" font-size="12" fill="#444" style="font-family:'Liberation Mono',monospace">1</text>
<text x="82" y="729" font-size="12" fill="#444" style="font-family:'Liberation Mono',monospace">2</text>
<text x="107" y="711" font-size="12" fill="#888" textLength="84" lengthAdjust="spacingAndGlyphs" style="font-family:'Liberation Mono',monospace">//@version=2</text>
<text x="107" y="729" font-size="12" fill="#555" textLength="126" lengthAdjust="spacingAndGlyphs" style="font-family:'Liberation Mono',monospace">study("My Script")</text>
<rect x="58" y="722.500" width="25" height="6" fill="#fff" stroke="#ddd"/><path d="M67 725h6l-3 3z" fill="#ccc"/>

<!-- taskbar -->
<rect y="728" width="1366" height="40" fill="url(#task)"/>
<rect y="728" width="1366" height="40" fill="url(#shine)"/>
<rect y="728" width="1366" height="1" fill="#0f2f4f"/>
<path d="M900 729q50 16 79 39h-10q-30-22-85-39z" fill="#9ac7e8" opacity=".7"/>
<circle cx="27" cy="748" r="18" fill="url(#orb)" stroke="#123a5c"/>
<path d="M18 742q4-2 8 0l-1 6q-4-2-8 0z" fill="#e8502a"/><path d="M27 742q4 2 8 0l-1 6q-4 2-8 0z" fill="#7fba3a"/><path d="M17 749q4-2 8 0l-1 6q-4-2-8 0z" fill="#3a9be0"/><path d="M26 749q4 2 8 0l-1 6q-4 2-8 0z" fill="#f0c030"/>
<g fill="url(#tbtn)" stroke="#d8eef8" stroke-opacity=".6"><rect x="60" y="729.500" width="50" height="38" rx="3"/><rect x="246" y="729.500" width="58" height="38" rx="3"/><rect x="308" y="729.500" width="58" height="38" rx="3"/><rect x="370" y="729.500" width="58" height="38" rx="3"/><rect x="432" y="729.500" width="58" height="38" rx="3"/></g>
<rect x="122" y="729.500" width="58" height="38" rx="3" fill="#fff" fill-opacity=".45" stroke="#f0f8fc"/>
<path d="M112.500 730v37M115.500 730v37" stroke="#d8eef8" stroke-opacity=".5"/>
<path d="M70 738h9l3 3h17v20H70z" fill="#f7e08f" stroke="#c8b060"/><rect x="72" y="738.500" width="4" height="2" fill="#3a9a4a"/><rect x="79" y="739.500" width="4" height="2" fill="#d83b2b"/><rect x="86" y="741" width="4" height="2" fill="#3a7de0"/><rect x="72" y="745" width="26" height="15" fill="#fdf3c0"/><path d="M75 761v-8h17q2 0 2 2v6" fill="#a8d8ee" stroke="#6aa8c8"/><circle cx="77" cy="752" r="2.500" fill="#fff"/>
<circle cx="151" cy="748" r="15" fill="#fff"/>
<path d="M151 748 138 740.500A15 15 0 0 1 164 740.500z" fill="#dd4030"/><path d="M151 748 164 740.500A15 15 0 0 1 151 763z" fill="#f5c518"/><path d="M151 748V763A15 15 0 0 1 138 740.500z" fill="#3aa850"/>
<circle cx="151" cy="748" r="8" fill="#fff"/><circle cx="151" cy="748" r="6" fill="#4a86e8"/>
<path fill-rule="evenodd" d="M213 733a15 15 0 1 0 0 30 15 15 0 1 0 0-30zM213 736a5 12 0 1 1 0 24 5 12 0 1 1 0-24z" fill="#d81a1f"/>
<ellipse cx="213" cy="748" rx="5" ry="12" fill="#7cbddd"/>
<path d="M266 733h18q6 0 6 6v12q0 6-6 6h-6l-6 7v-7h-6q-6 0-6-6v-12q0-6 6-6z" fill="#7b519d" stroke="#fff" stroke-width="1.500"/>
<path d="M269 739q-2.500 1-2 3.500 2.500 7.500 10 11 2.500 1 4-2l-3-3-2.500 1q-3-2-4-5l1.500-2z" fill="#fff"/><path d="M275 739a8 8 0 0 1 8 8M275 742a5 5 0 0 1 5 5" fill="none" stroke="#fff"/>
<polygon points="323,735 340,732 352,741 350,761 323,757" fill="#f4f8ee" stroke="#4a9a2a" stroke-width="1.500"/>
<g fill="#4f9e3a"><rect x="342" y="744" width="4" height="4"/><rect x="347" y="744" width="4" height="4"/><rect x="342" y="749" width="4" height="4"/><rect x="347" y="749" width="4" height="4"/><rect x="328" y="754" width="4" height="3"/><rect x="333" y="754" width="4" height="3"/><rect x="338" y="754" width="4" height="3"/><rect x="343" y="754" width="4" height="3"/></g>
<text x="326" y="752" font-size="15" font-weight="bold" fill="#1f6a1a">X</text>
<circle cx="399" cy="748" r="16" fill="#f26a10"/><path d="M390 752.500q0-2 2.500-2t2.500 2v9.500h-5zM397 746.500q0-2 2.500-2t2.500 2v15.500h-5zM403.500 740.500q0-2 2.250-2t2.250 2v19l-4.500 2z" fill="#fff"/>
<polygon points="447,735 470,732 475,738 475,758 450,762" fill="#f6f8fc" stroke="#3a5ea8"/>
<path d="M462 745h11M462 748.500h11M462 752h11M451 756h22M451 759h14" stroke="#2a4f9a" stroke-width="1.500"/>
<text x="449" y="751" font-size="14" font-weight="bold" fill="#2a4f9a">W</text>
<text x="1152.500" y="750" font-size="12" fill="#e8f2fa" textLength="16" lengthAdjust="spacingAndGlyphs">RU</text>
<path d="M1183 751h8l-4-4z" fill="#fff"/>
<rect x="1206" y="744" width="9" height="13" rx="1" fill="#e8eef4" stroke="#fff"/><path d="M1208 744v-5h5v5" fill="#ddd" stroke="#fff"/><rect x="1209" y="752" width="3" height="8" fill="#fff"/>
<path d="M1228 754h2v2h-2zM1232 751h2v5h-2zM1236 748h2v8h-2zM1240 745h2v11h-2z" fill="#fff"/>
<path d="M1255 745h4l4-5v17l-4-5h-4z" fill="#e8eef4"/><path d="M1265 745q2 3.500 0 7" fill="none" stroke="#dde" />
<text x="1312" y="745" font-size="12" fill="#fff" text-anchor="middle" textLength="26" lengthAdjust="spacingAndGlyphs">16:55</text>
<text x="1312.500" y="762" font-size="12" fill="#fff" text-anchor="middle" textLength="54" lengthAdjust="spacingAndGlyphs">19.08.2016</text>
<rect x="1352" y="729" width="14" height="39" fill="#0f3a60" stroke="#5a88aa"/>
</svg>
</body></html>
